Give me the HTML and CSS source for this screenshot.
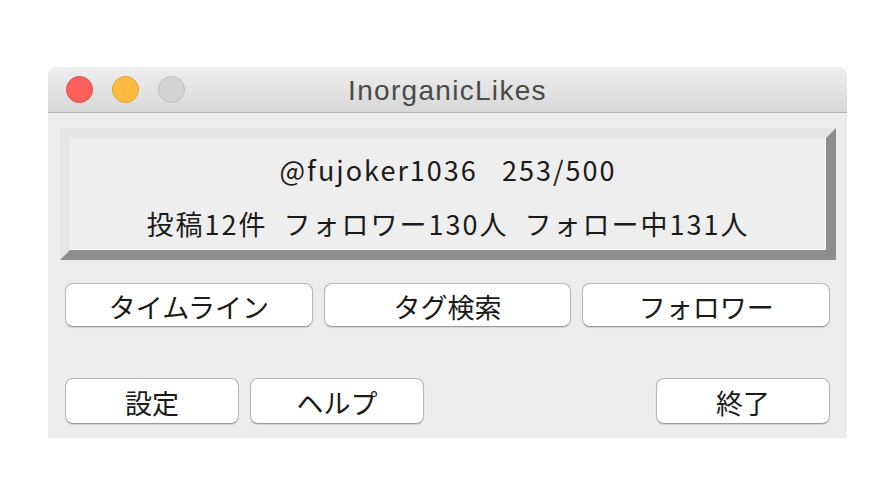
FILE: index.html
```html
<!DOCTYPE html>
<html lang="ja">
<head>
<meta charset="utf-8">
<title>InorganicLikes</title>
<link rel="stylesheet" href="styles.css">
</head>
<body>
<div class="window">
  <div class="titlebar">
    <div class="lights">
      <span class="light close"></span>
      <span class="light minimize"></span>
      <span class="light zoom"></span>
    </div>
    <div class="title">InorganicLikes</div>
  </div>
  <div class="content">
    <div class="info">
      <div class="line">@fujoker1036&nbsp;&nbsp;&nbsp;253/500</div>
      <div class="line">投稿12件&nbsp;&nbsp;フォロワー130人&nbsp;&nbsp;フォロー中131人</div>
    </div>
    <div class="row-main">
      <button class="btn">タイムライン</button>
      <button class="btn">タグ検索</button>
      <button class="btn">フォロワー</button>
    </div>
    <div class="row-bottom">
      <button class="btn small">設定</button>
      <button class="btn small">ヘルプ</button>
      <span class="spacer"></span>
      <button class="btn small">終了</button>
    </div>
  </div>
</div>
</body>
</html>
```

FILE: styles.css
```css
html, body {
  margin: 0;
  padding: 0;
  background: #ffffff;
}

body {
  padding-top: 67px;
  padding-left: 48px;
}

.window {
  width: 799px;
  background: #ececec;
  border-radius: 9px 9px 0 0;
  overflow: hidden;
  font-family: "Noto Sans CJK JP", "Liberation Sans", sans-serif;
}

.titlebar {
  position: relative;
  height: 45px;
  border-bottom: 1px solid #b3b3b3;
  background: linear-gradient(#eeeeee, #d8d8d8);
  display: flex;
  align-items: center;
  justify-content: center;
}

.lights {
  position: absolute;
  left: 18px;
  top: 9px;
  display: flex;
  gap: 19px;
}

.light {
  width: 25px;
  height: 25px;
  border-radius: 50%;
  border: 1px solid transparent;
}

.close { background: #fc605c; border-color: #df4a45; }
.minimize { background: #fdbc40; border-color: #dda12d; }
.zoom { background: #d3d3d3; border-color: #bdbdbd; }

.title {
  font-family: "Liberation Sans", "Noto Sans", sans-serif;
  font-size: 28px;
  letter-spacing: 1.3px;
  color: #4a4a4a;
  padding-top: 3px;
}

.content {
  padding: 15px 0 14px 0;
}

.info {
  box-sizing: border-box;
  height: 132px;
  margin: 0 11px 0 12px;
  border: 10px solid;
  border-color: #e6e6e6 #8d8d8d #8d8d8d #e6e6e6;
  background: #eeeeee;
  box-shadow: inset -1px -1px 0 #fafafa;
  padding-top: 5px;
  text-align: center;
  color: #1a1a1a;
}

.line {
  height: 54px;
  line-height: 54px;
  font-size: 27px;
  letter-spacing: 2px;
}

.row-main {
  display: grid;
  grid-template-columns: repeat(3, 1fr);
  gap: 11px;
  margin: 23px 17px 0 17px;
}

.row-bottom {
  display: flex;
  gap: 11px;
  margin: 51px 17px 0 17px;
}

.spacer {
  flex: 1;
}

.btn {
  height: 44px;
  background: #ffffff;
  border: 1px solid #b8b8b8;
  border-bottom-color: #9c9c9c;
  border-radius: 8px;
  box-shadow: 0 1px 1px rgba(0, 0, 0, 0.12);
  font-family: "Noto Sans CJK JP", "Liberation Sans", sans-serif;
  font-size: 27px;
  color: #1a1a1a;
  padding: 2px 0 0 0;
  line-height: 1;
}

.btn.small {
  width: 174px;
  height: 46px;
}
```
